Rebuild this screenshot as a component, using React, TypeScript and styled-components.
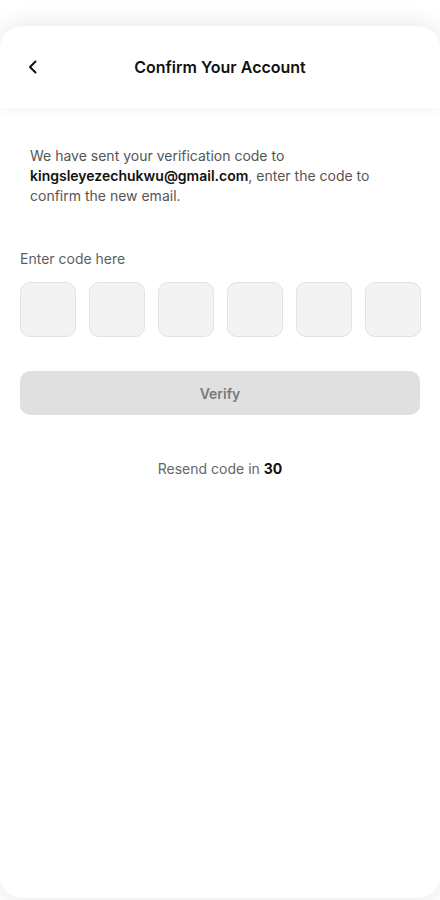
import React from 'react';
import styled, { createGlobalStyle } from 'styled-components';

const GlobalStyle = createGlobalStyle`
    * {
        box-sizing: border-box;
    }
    body {
        margin: 0;
        background: #ffffff;
        font-family: Inter, "Noto Sans", sans-serif;
    }
`;

const CODE_LENGTH = 6;

export default function App() {
    return (
        <>
            <GlobalStyle />
            <Page>
                <Sheet>
                    <Header>
                        <BackButton aria-label="Back">
                            <svg width="16" height="16" viewBox="0 0 16 16" fill="none">
                                <path d="M10.5 2.5L5 8L10.5 13.5" stroke="#111" strokeWidth="2" strokeLinecap="round" strokeLinejoin="round" />
                            </svg>
                        </BackButton>
                        <Title>Confirm Your Account</Title>
                    </Header>
                    <Body>
                        <Intro>
                            We have sent your verification code to <Email>kingsleyezechukwu@gmail.com</Email>, enter the code to confirm the new email.
                        </Intro>
                        <Label>Enter code here</Label>
                        <CodeRow>
                            {Array.from({ length: CODE_LENGTH }).map((_, i) => (
                                <CodeBox key={i} maxLength={1} inputMode="numeric" />
                            ))}
                        </CodeRow>
                        <VerifyButton disabled>Verify</VerifyButton>
                        <Resend>
                            Resend code in <Timer>30</Timer>
                        </Resend>
                    </Body>
                </Sheet>
            </Page>
        </>
    );
}

const Page = styled.div`
    min-height: 900px;
    padding-top: 26px;
    padding-bottom: 2px;
    background: #ffffff;
`;

const Sheet = styled.div`
    height: 872px;
    background: #ffffff;
    border-radius: 22px;
    box-shadow: 0 0 26px rgba(0, 0, 0, 0.11);
    overflow: hidden;
`;

const Header = styled.header`
    position: relative;
    height: 82px;
    display: flex;
    align-items: center;
    justify-content: center;
    background: #ffffff;
    box-shadow: 0 4px 12px rgba(0, 0, 0, 0.04);
`;

const BackButton = styled.button`
    position: absolute;
    left: 24px;
    top: 50%;
    transform: translateY(-50%);
    display: flex;
    align-items: center;
    justify-content: center;
    width: 18px;
    height: 18px;
    padding: 0;
    border: none;
    background: none;
`;

const Title = styled.h1`
    margin: 0;
    font-size: 16px;
    font-weight: 600;
    color: #111111;
`;

const Body = styled.main`
    display: flex;
    flex-direction: column;
    padding: 38px 20px 0;
`;

const Intro = styled.p`
    margin: 0 0 43px;
    padding: 0 10px;
    font-size: 14px;
    line-height: 20px;
    color: #555555;
`;

const Email = styled.strong`
    font-weight: 600;
    color: #111111;
`;

const Label = styled.span`
    font-size: 14px;
    line-height: 20px;
    color: #5f5f5f;
`;

const CodeRow = styled.div`
    display: flex;
    gap: 13px;
    margin-top: 13px;
`;

const CodeBox = styled.input`
    flex: 0 0 56px;
    width: 56px;
    height: 55px;
    border: 1px solid #e2e2e2;
    border-radius: 10px;
    background: #f3f3f3;
    text-align: center;
    font-family: inherit;
    font-size: 20px;
    outline: none;
`;

const VerifyButton = styled.button`
    margin-top: 34px;
    height: 44px;
    border: none;
    border-radius: 10px;
    background: #e0e0e0;
    color: #7a7a7a;
    font-family: inherit;
    font-size: 14px;
    font-weight: 600;
`;

const Resend = styled.p`
    margin: 44px 0 0;
    text-align: center;
    font-size: 14px;
    line-height: 20px;
    color: #666666;
`;

const Timer = styled.strong`
    font-weight: 700;
    color: #111111;
`;
